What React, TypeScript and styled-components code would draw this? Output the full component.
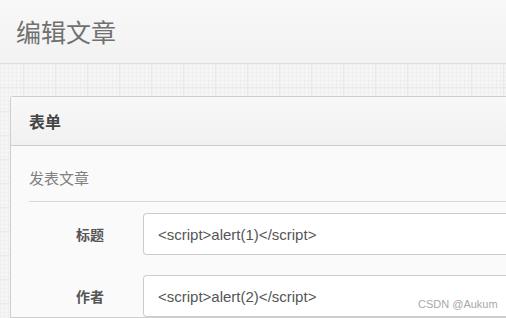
import React from "react";
import styled, { createGlobalStyle } from "styled-components";

const Global = createGlobalStyle`
  html, body { margin: 0; padding: 0; overflow: hidden; }
  body {
    width: 506px;
    height: 318px;
    font-family: "Liberation Sans", "Noto Sans CJK SC", sans-serif;
    background-color: #f6f6f6;
    background-image:
      linear-gradient(to right, #e9e9e9 1px, transparent 1px),
      linear-gradient(to bottom, #e9e9e9 1px, transparent 1px),
      linear-gradient(to right, #efefef 1px, transparent 1px),
      linear-gradient(to bottom, #efefef 1px, transparent 1px);
    background-size: 32px 24px, 32px 24px, 4px 4px, 4px 4px;
    background-position: 23px 87px, 23px 87px, 0 0, 0 0;
  }
`;

const Page = styled.div`
  position: relative;
  height: 318px;
  display: flex;
  flex-direction: column;
`;

const Header = styled.header`
  height: 63px;
  border-bottom: 1px solid #dcdcdc;
  background: linear-gradient(to bottom, #f8f8f8, #f2f2f2);
  display: flex;
  align-items: center;
  padding-left: 16px;
  flex-shrink: 0;
`;

const Title = styled.h1`
  margin: 0 0 2px 0;
  font-family: "Noto Sans CJK SC", sans-serif;
  font-weight: 400;
  font-size: 25px;
  color: #707070;
`;

const Content = styled.main`
  padding: 32px 0 0 10px;
`;

const Panel = styled.section`
  border: 1px solid #cfcfcf;
  border-right: none;
  border-radius: 3px 0 0 0;
  background: #fafafa;
`;

const PanelHeader = styled.div`
  height: 48px;
  display: flex;
  align-items: center;
  padding-left: 18px;
  background: linear-gradient(to bottom, #f8f8f8, #f1f1f1);
  border-bottom: 1px solid #cccccc;
  font-family: "Noto Sans CJK SC", sans-serif;
  font-weight: 700;
  font-size: 16px;
  color: #444;
`;

const PanelBody = styled.div`
  padding-left: 18px;
`;

const Legend = styled.div`
  padding: 22px 0 13px;
  line-height: 20px;
  border-bottom: 1px solid #d8d8d8;
  font-family: "Noto Sans CJK SC", sans-serif;
  font-size: 15px;
  color: #808080;
`;

const Form = styled.div`
  display: flex;
  flex-direction: column;
  gap: 20px;
  padding-top: 11px;
`;

const Row = styled.div`
  display: flex;
  align-items: center;
`;

const Label = styled.label`
  width: 75px;
  margin-right: 39px;
  text-align: right;
  font-family: "Noto Sans CJK SC", sans-serif;
  font-weight: 700;
  font-size: 14px;
  color: #555;
`;

const Input = styled.div`
  box-sizing: border-box;
  flex: 1;
  height: 42px;
  display: flex;
  align-items: center;
  padding-left: 14px;
  background: #fff;
  border: 1px solid #cccccc;
  border-right: none;
  border-radius: 4px 0 0 4px;
  font-family: "Liberation Sans", sans-serif;
  font-size: 15px;
  color: #555;
`;

const Watermark = styled.div`
  position: absolute;
  left: 418px;
  top: 298px;
  font-family: "Liberation Sans", sans-serif;
  font-size: 11px;
  color: #a8a8a8;
`;

const fields = [
  { label: "标题", value: "<script>alert(1)</script>" },
  { label: "作者", value: "<script>alert(2)</script>" },
];

export default function App() {
  return (
    <Page>
      <Global />
      <Header>
        <Title>编辑文章</Title>
      </Header>
      <Content>
        <Panel>
          <PanelHeader>表单</PanelHeader>
          <PanelBody>
            <Legend>发表文章</Legend>
            <Form>
              {fields.map((f) => (
                <Row key={f.label}>
                  <Label>{f.label}</Label>
                  <Input>{f.value}</Input>
                </Row>
              ))}
            </Form>
          </PanelBody>
        </Panel>
      </Content>
      <Watermark>CSDN @Aukum</Watermark>
    </Page>
  );
}
